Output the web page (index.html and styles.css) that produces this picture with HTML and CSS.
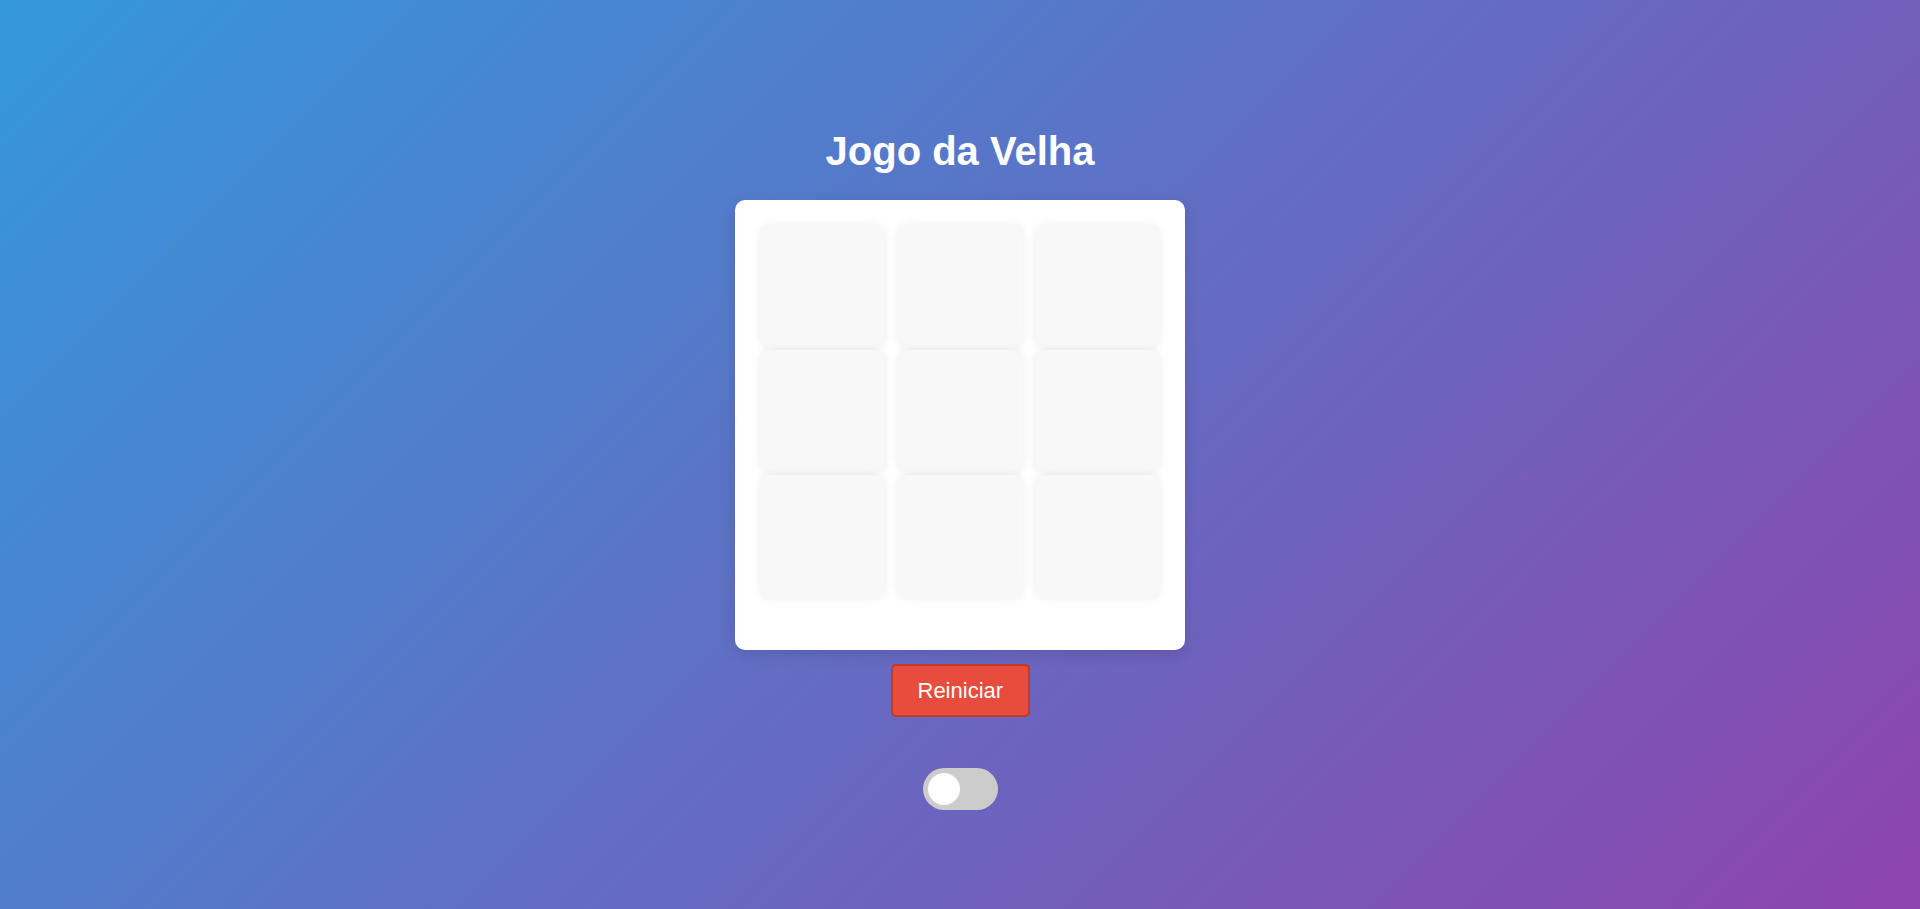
FILE: index.html
```html
<!DOCTYPE html>
<html lang="pt">
<head>
<meta charset="utf-8">
<title>Jogo da Velha</title>
<link rel="stylesheet" href="styles.css">
</head>
<body>
<main class="app">
  <h1 class="title">Jogo da Velha</h1>
  <div class="board">
    <div class="grid">
      <div class="cell"></div><div class="cell"></div><div class="cell"></div>
      <div class="cell"></div><div class="cell"></div><div class="cell"></div>
      <div class="cell"></div><div class="cell"></div><div class="cell"></div>
    </div>
  </div>
  <button class="reset">Reiniciar</button>
  <label class="toggle"><span class="knob"></span></label>
</main>
</body>
</html>
```

FILE: styles.css
```css
html, body {
  margin: 0;
  padding: 0;
  height: 100%;
}
body {
  background: linear-gradient(135deg, #3498db, #8e44ad);
  font-family: "Liberation Sans", Arial, sans-serif;
  min-height: 100vh;
}
.app {
  display: flex;
  flex-direction: column;
  align-items: center;
  padding-top: 128px;
}
.title {
  margin: 0 0 26px;
  color: #fff;
  font-size: 40px;
  font-weight: bold;
  line-height: 46px;
}
.board {
  box-sizing: border-box;
  width: 450px;
  height: 450px;
  padding: 25px;
  background: #fff;
  border-radius: 10px;
  box-shadow: 0 4px 15px rgba(0, 0, 0, 0.12);
}
.grid {
  display: grid;
  grid-template-columns: repeat(3, 125px);
  grid-auto-rows: 123px;
  column-gap: 12.5px;
  row-gap: 2px;
}
.cell {
  background: #f8f8f8;
  border-radius: 12px;
  box-shadow: 0 0 10px rgba(0, 0, 0, 0.08);
}
.reset {
  margin-top: 14px;
  box-sizing: border-box;
  width: 139px;
  height: 53px;
  padding: 0 25px;
  background: #e74c3c;
  color: #fff;
  border: 2px solid #c0392b;
  border-radius: 5px;
  font-family: "Liberation Sans", Arial, sans-serif;
  font-size: 22px;
  cursor: pointer;
}
.toggle {
  margin-top: 51px;
  display: flex;
  align-items: center;
  box-sizing: border-box;
  width: 75px;
  height: 42px;
  padding: 0 5px;
  background: #ccc;
  border-radius: 21px;
}
.knob {
  width: 32px;
  height: 32px;
  border-radius: 50%;
  background: #fff;
}
```
